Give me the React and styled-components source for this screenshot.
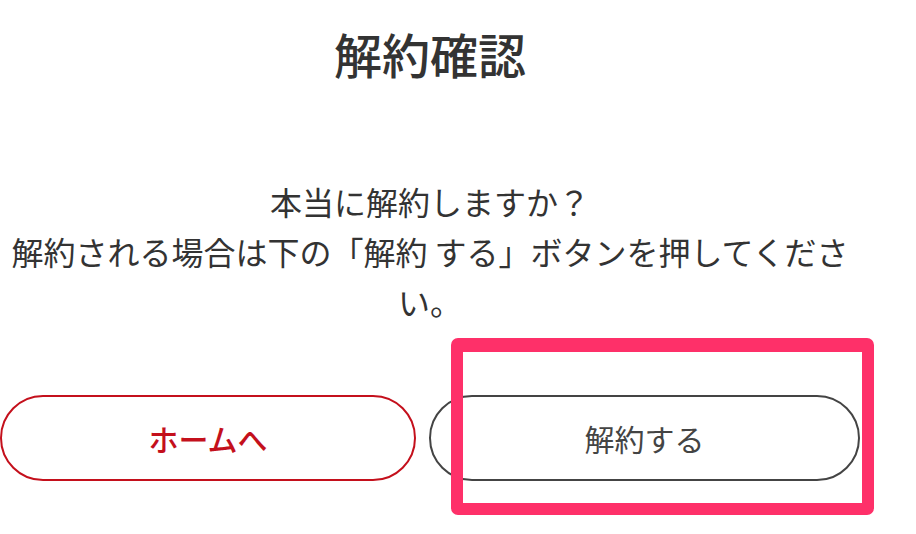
import React from 'react'
import styled, { createGlobalStyle } from 'styled-components';

const GlobalStyle = createGlobalStyle`
    html, body {
        margin: 0;
        background: #fff;
        font-family: "Noto Sans CJK JP", "Noto Sans", sans-serif;
        color: #333;
    }
`;
const PageStyle = styled.div`
    width: 860px;
    min-height: 534px;
    display: flex;
    flex-direction: column;
    align-items: center;
`;
const TitleStyle = styled.h1`
    margin: 18px 0 0;
    width: 856px;
    text-align: center;
    font-size: 48px;
    line-height: 70px;
    font-weight: 500;
    color: #333;
`;
const MessageStyle = styled.p`
    margin: 88px 0 0;
    width: 856px;
    text-align: center;
    font-size: 32px;
    line-height: 50px;
    color: #333;
`;
const ButtonRowStyle = styled.div`
    margin-top: 69px;
    width: 860px;
    display: grid;
    grid-template-columns: 416px 431px;
    gap: 13px;
`;
const ButtonStyle = styled.button`
    height: 86px;
    border-radius: 43px;
    background: #fff;
    border: 2px solid ${({primary}) => primary ? '#c4101c' : '#444'};
    color: ${({primary}) => primary ? '#c4101c' : '#444'};
    font-family: inherit;
    font-size: 30px;
    font-weight: ${({primary}) => primary ? 500 : 400};
    cursor: pointer;
`;
const HighlightWrapStyle = styled.div`
    position: relative;
    display: flex;
    flex-direction: column;
`;
const HighlightStyle = styled.div`
    position: absolute;
    top: -57px;
    left: 22px;
    right: -14px;
    bottom: -34px;
    border: 12px solid #fe3069;
    border-top-width: 14px;
    border-radius: 7px;
    pointer-events: none;
`;

const App = () => {
    return (
        <PageStyle>
            <GlobalStyle/>
            <TitleStyle>解約確認</TitleStyle>
            <MessageStyle>
                本当に解約しますか？<br/>
                解約される場合は下の「解約 する」ボタンを押してください。
            </MessageStyle>
            <ButtonRowStyle>
                <ButtonStyle primary>ホームへ</ButtonStyle>
                <HighlightWrapStyle>
                    <ButtonStyle>解約する</ButtonStyle>
                    <HighlightStyle/>
                </HighlightWrapStyle>
            </ButtonRowStyle>
        </PageStyle>
    )
}

export default App;
